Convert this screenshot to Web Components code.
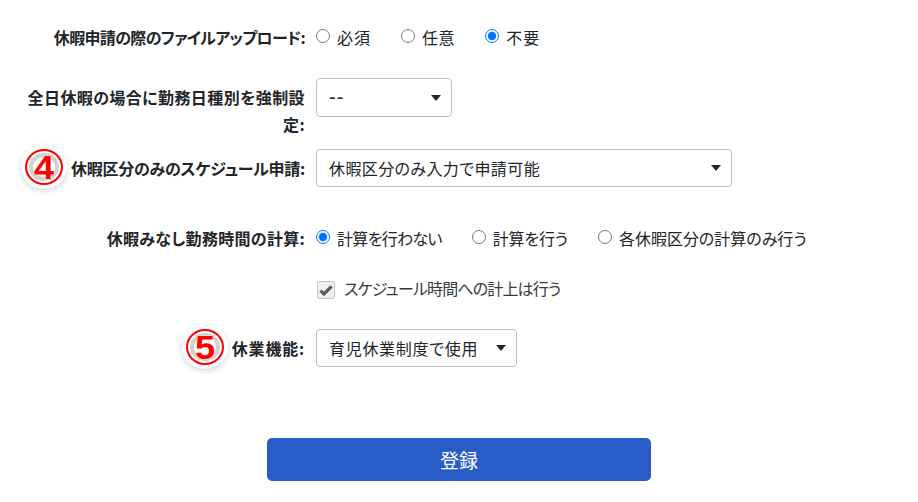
<!DOCTYPE html>
<html lang="ja">
<head>
<meta charset="utf-8">
<title>休暇設定</title>
<style>
  body { margin: 0; background: #fff; color: #212529; font-family: "Noto Sans CJK JP", sans-serif; font-size: 16px; }
  .form { display: flex; flex-direction: column; padding-top: 24px; }
  .mt-row2 { margin-top: 27px; }
  .mt-row3 { margin-top: 11px; }
  .mt-row4 { margin-top: 38px; }
  .mt-row5 { margin-top: 23px; }
  .mt-row6 { margin-top: 27px; }
  .mt-submit { margin-top: 71px; }
</style>
</head>
<body>

<template id="form-row-template">
  <style>
    :host { display: grid; grid-template-columns: 305px 1fr; column-gap: 11px; }
    .label {
      position: relative;
      text-align: right;
      font-weight: 700;
      font-size: 16px;
      line-height: 27px;
      font-feature-settings: "palt";
      letter-spacing: var(--track, 0);
      color: #212529;
      padding-left: 20px;
    }
    :host([boxed]) .label { padding-top: 6px; }
    .control { display: flex; align-items: center; min-height: 27px; align-self: start; }
  </style>
  <div class="label"><slot name="badge"></slot><slot></slot></div>
  <div class="control"><slot name="control"></slot></div>
</template>

<template id="radio-group-template">
  <style>
    :host { display: flex; align-items: center; gap: 30px; }
  </style>
  <slot></slot>
</template>

<template id="radio-option-template">
  <style>
    :host { display: inline-flex; align-items: center; font-size: 16px; line-height: 27px; font-feature-settings: "palt"; color: #212529; }
    input { width: 14px; height: 14px; margin: 0 7px 3px 0; }
  </style>
  <input type="radio">
  <slot></slot>
</template>

<template id="check-option-template">
  <style>
    :host { display: inline-flex; align-items: center; font-size: 16px; line-height: 27px; font-feature-settings: "palt"; color: #343a40; }
    svg { width: 18px; height: 18px; margin: 3px 9px 0 1px; flex: none; }
  </style>
  <svg viewBox="0 0 18 18">
    <rect x=".5" y=".5" width="17" height="17" rx="2" fill="#f0f0f0" stroke="#c4c4c4"/>
    <path d="M3.4 9.6 7 13 14.6 5.4" fill="none" stroke="#5c5c5c" stroke-width="3.2"/>
  </svg>
  <slot></slot>
</template>

<template id="select-box-template">
  <style>
    :host {
      display: flex; align-items: center; justify-content: space-between;
      box-sizing: border-box;
      height: 38px;
      padding: 0 10px 0 12px;
      background: #fff;
      border: 1px solid #bfbfbf;
      border-radius: 4px;
      font-size: 16px;
      font-feature-settings: "palt";
      color: #212529;
    }
    svg { width: 10px; height: 6px; flex: none; }
  </style>
  <span><slot></slot></span>
  <svg viewBox="0 0 10 6"><path d="M0 0h10L5 6z" fill="#212529"/></svg>
</template>

<template id="step-badge-template">
  <style>
    :host {
      position: absolute; top: 0;
      display: flex; align-items: center; justify-content: center;
      box-sizing: border-box;
      width: 38px; height: 36px;
      background: #fff;
      border: 2px solid #f00;
      border-radius: 50%;
      box-shadow: 0 0 0 4px #fff, 0 2px 6px 4px rgba(0, 0, 0, .16);
      color: #f00;
      font-family: "Liberation Sans", sans-serif;
      font-weight: 700;
      font-size: 33px;
      line-height: 1;
      letter-spacing: 0;
    }
    .ghost {
      position: absolute; inset: 2px;
      border: 4px solid #d2d2d2;
      border-radius: 50%;
    }
    .digit { position: relative; display: block; transform: scaleX(1.1); text-shadow: 0 0 1px #fff, 0 0 1px #fff; }
  </style>
  <div class="ghost"></div>
  <span class="digit"><slot></slot></span>
</template>

<template id="submit-button-template">
  <style>
    :host {
      display: flex; align-items: center; justify-content: center;
      box-sizing: border-box;
      width: 384px; height: 43px;
      background: #2a5cc8;
      border-radius: 5px;
      color: #fff;
      font-size: 19px;
    }
  </style>
  <slot></slot>
</template>

<div class="form">
  <form-row style="--track:-.65px">
    休暇申請の際のファイルアップロード:
    <radio-group slot="control">
      <radio-option style="letter-spacing:1px">必須</radio-option>
      <radio-option style="letter-spacing:.6px">任意</radio-option>
      <radio-option style="letter-spacing:1px" checked>不要</radio-option>
    </radio-group>
  </form-row>

  <form-row class="mt-row2" boxed style="--track:.4px">
    全日休暇の場合に勤務日種別を強制設定:
    <select-box slot="control" style="width:136px;height:39px;letter-spacing:1px;font-family:'Liberation Sans',sans-serif;font-size:20px">--</select-box>
  </form-row>

  <form-row class="mt-row3" boxed style="--track:-.25px">
    <step-badge slot="badge" style="left:25px">4</step-badge>
    休暇区分のみのスケジュール申請:
    <select-box slot="control" style="width:416px;letter-spacing:.4px">休暇区分のみ入力で申請可能</select-box>
  </form-row>

  <form-row class="mt-row4" style="--track:.3px">
    休暇みなし勤務時間の計算:
    <radio-group slot="control">
      <radio-option style="letter-spacing:-.7px" checked>計算を行わない</radio-option>
      <radio-option style="letter-spacing:-.2px">計算を行う</radio-option>
      <radio-option>各休暇区分の計算のみ行う</radio-option>
    </radio-group>
  </form-row>

  <form-row class="mt-row5">
    <span></span>
    <check-option slot="control" style="letter-spacing:-.85px">スケジュール時間への計上は行う</check-option>
  </form-row>

  <form-row class="mt-row6" boxed style="--track:.8px">
    <step-badge slot="badge" style="left:186px">5</step-badge>
    休業機能:
    <select-box slot="control" style="width:201px;letter-spacing:.7px">育児休業制度で使用</select-box>
  </form-row>

  <submit-button class="mt-submit" style="margin-left:267px">登録</submit-button>
</div>

<script>
  // every element here is the same thing: clone its template into an open shadow root
  class TemplateElement extends HTMLElement {
    constructor() {
      super();
      this.shadowDOM = this.attachShadow({ mode: "open" });
      const template = document.getElementById(this.constructor.templateId);
      this.shadowDOM.appendChild(template.content.cloneNode(true));
    }
  }

  class FormRow extends TemplateElement {
    static templateId = "form-row-template";
  }

  class RadioGroup extends TemplateElement {
    static templateId = "radio-group-template";
  }

  class RadioOption extends TemplateElement {
    static templateId = "radio-option-template";

    connectedCallback() {
      this.shadowDOM.querySelector("input").checked = this.hasAttribute("checked");
    }
  }

  class CheckOption extends TemplateElement {
    static templateId = "check-option-template";
  }

  class SelectBox extends TemplateElement {
    static templateId = "select-box-template";
  }

  class StepBadge extends TemplateElement {
    static templateId = "step-badge-template";
  }

  class SubmitButton extends TemplateElement {
    static templateId = "submit-button-template";
  }

  customElements.define("form-row", FormRow);
  customElements.define("radio-group", RadioGroup);
  customElements.define("radio-option", RadioOption);
  customElements.define("check-option", CheckOption);
  customElements.define("select-box", SelectBox);
  customElements.define("step-badge", StepBadge);
  customElements.define("submit-button", SubmitButton);
</script>
</body>
</html>
